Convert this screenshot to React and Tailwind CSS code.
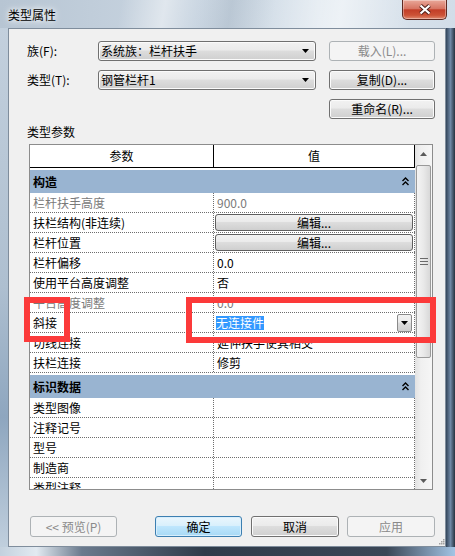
import React from 'react'

const face = "font-['Noto_Sans_CJK_SC','Noto_Sans',sans-serif]"
const btnFace = 'bg-[linear-gradient(#f2f2f2,#ebebeb_45%,#dddddd_50%,#cfcfcf)]'

function Tri({ up, color = '#000' }) {
    return (
        <svg width="7" height="4" viewBox="0 0 7 4">
            <path d={up ? 'M0 4h7L3.5 0z' : 'M0 0h7L3.5 4z'} fill={color} />
        </svg>
    )
}

function Btn({ children, disabled, focused, className = '' }) {
    const look = disabled
        ? 'border-[#adb2b5] bg-[#f4f4f4] text-[#8a8a8a]'
        : focused
            ? 'border-[#3c7fb1] bg-[linear-gradient(#eaf6fd,#d9f0fc_45%,#bee6fd_50%,#a7d9f5)] shadow-[inset_0_0_0_1px_#d8eefc]'
            : `border-[#707070] ${btnFace} shadow-[inset_0_0_0_1px_#fbfbfb]`
    return (
        <div className={`h-full flex items-center justify-center rounded-[3px] border leading-none ${look} ${className}`}>
            {children}
        </div>
    )
}

function Combo({ text }) {
    return (
        <div className={`w-[218px] h-full flex items-center justify-between rounded-[3px] border border-[#707070] ${btnFace} shadow-[inset_0_0_0_1px_#fbfbfb] pl-[2px] pr-[6px]`}>
            <span>{text}</span>
            <Tri />
        </div>
    )
}

function Chevrons() {
    return (
        <svg width="7" height="9" viewBox="0 0 7 9">
            <path d="M0.5 4 3.5 1 6.5 4M0.5 8 3.5 5 6.5 8" stroke="#000" strokeWidth="1.4" fill="none" />
        </svg>
    )
}

function Section({ title }) {
    return (
        <div className="pt-[2px] bg-white">
            <div className="h-[23px] bg-[#99b4d1] flex items-center justify-between pl-[3px] pr-[6px] font-bold">
                <span>{title}</span>
                <Chevrons />
            </div>
        </div>
    )
}

function Row({ k, v, gray, btn, combo }) {
    return (
        <div className="flex h-[20px] border-b border-dotted border-[#6e6e6e] bg-white">
            <div className={`w-[184px] shrink-0 pl-[3px] flex items-center border-r border-dotted border-[#6e6e6e] whitespace-nowrap overflow-hidden ${gray ? 'text-[#7a7a7a]' : ''}`}>{k}</div>
            <div className={`w-[201px] shrink-0 flex items-center border-r border-dotted border-[#6e6e6e] ${gray ? 'text-[#7a7a7a]' : ''}`}>
                {btn && (
                    <div className={`ml-[1px] w-[198px] h-[17px] flex items-center justify-center rounded-[3px] border border-[#5f5f5f] ${btnFace}`}>编辑...</div>
                )}
                {combo && (
                    <div className="w-full flex items-center justify-between pl-[2px] pr-[2px]">
                        <span className="bg-[#3399ff] text-white leading-[14px]">{combo}</span>
                        <div className={`w-[15px] h-[18px] flex items-center justify-center rounded-[2px] border border-[#8a8a8a] ${btnFace}`}>
                            <Tri />
                        </div>
                    </div>
                )}
                {v !== undefined && <span className="pl-[3px]">{v}</span>}
            </div>
        </div>
    )
}

const build = [
    { k: '栏杆扶手高度', v: '900.0', gray: true },
    { k: '扶栏结构(非连续)', btn: true },
    { k: '栏杆位置', btn: true },
    { k: '栏杆偏移', v: '0.0' },
    { k: '使用平台高度调整', v: '否' },
    { k: '平台高度调整', v: '0.0', gray: true },
    { k: '斜接', combo: '无连接件' },
    { k: '切线连接', v: '延伸扶手使其相交' },
    { k: '扶栏连接', v: '修剪' },
]

const ident = ['类型图像', '注释记号', '型号', '制造商', '类型注释']

export default function App() {
    return (
        <div className={`relative w-[455px] h-[556px] overflow-hidden flex flex-col text-[12px] leading-[16px] text-black ${face} bg-[linear-gradient(100deg,transparent_22%,rgba(255,255,255,0.45)_30%,transparent_36%,rgba(120,140,160,0.25)_42%,transparent_50%,rgba(255,255,255,0.5)_62%,transparent_75%),linear-gradient(to_right,#b7c5d3,#c9d5e1_40%,#dde6ee_70%,#d2dde8)]`}>
            {/* title bar */}
            <div className="h-[28px] shrink-0 flex items-start justify-between">
                <div className="pl-[8px] pt-[7px] [text-shadow:0_0_5px_#fff,0_0_8px_#fff]">类型属性</div>
                <div className="mr-[8px] w-[45px] h-[20px] rounded-b-[5px] border border-t-0 border-[#5e2a22] bg-[linear-gradient(#e9a899,#d77563_45%,#c23e28_52%,#cc5236_80%,#e08a70)] shadow-[inset_0_0_0_1px_rgba(255,255,255,0.35)] flex items-center justify-center">
                    <svg width="14" height="11" viewBox="0 0 14 11">
                        <path d="M2.5 1.5 11.5 9.5M11.5 1.5 2.5 9.5" stroke="#4a1d17" strokeWidth="4" />
                        <path d="M2.5 1.5 11.5 9.5M11.5 1.5 2.5 9.5" stroke="#fff" strokeWidth="2.2" />
                    </svg>
                </div>
            </div>

            <div className="flex flex-1">
                <div className="w-[8px] bg-[linear-gradient(#c3d0dd,#aebfd0_50%,#8ea6bf_75%,#c0cfdd)]" />
                {/* client area */}
                <div className="w-[438px] h-[519px] border border-[#7f8d9c] bg-[#f0f0f0] pl-[18px] pr-[10px] pt-[12px]">
                    <div className="flex items-center h-[20px]">
                        <span className="w-[71px]">族(F):</span>
                        <Combo text="系统族：栏杆扶手" />
                        <Btn disabled className="ml-[13px] w-[106px]">载入(L)...</Btn>
                    </div>
                    <div className="flex items-center h-[20px] mt-[9px]">
                        <span className="w-[71px]">类型(T):</span>
                        <Combo text="钢管栏杆1" />
                        <Btn className="ml-[13px] w-[106px]">复制(D)...</Btn>
                    </div>
                    <div className="flex justify-end h-[20px] mt-[9px]">
                        <Btn className="w-[106px]">重命名(R)...</Btn>
                    </div>
                    <div className="h-[25px] flex items-center">类型参数</div>

                    {/* parameter grid */}
                    <div className="ml-[2px] w-[404px] h-[346px] border border-[#8c8c8c] bg-white flex">
                        <div className="w-[385px] overflow-hidden">
                            <div className="flex h-[23px] bg-white border-b border-black">
                                <div className="w-[184px] flex items-center justify-center border-r border-black">参数</div>
                                <div className="w-[201px] flex items-center justify-center border-r border-black">值</div>
                            </div>
                            <Section title="构造" />
                            {build.map((r) => <Row key={r.k} {...r} />)}
                            <Section title="标识数据" />
                            {ident.map((k) => <Row key={k} k={k} v="" />)}
                        </div>
                        <div className="w-[17px] flex flex-col bg-[linear-gradient(to_right,#e2e2e2,#f0f0f0_35%,#f6f6f6)]">
                            <div className="h-[17px] flex items-center justify-center"><Tri up color="#5a5a5a" /></div>
                            <div className="mx-[1px] mt-[3px] h-[193px] rounded-[2px] border border-[#9a9a9a] bg-[linear-gradient(to_right,#f4f4f4,#e9e9e9_50%,#d8d8d8)] flex items-center justify-center">
                                <svg width="8" height="7" viewBox="0 0 8 7">
                                    <path d="M0 0.5h8M0 3.5h8M0 6.5h8" stroke="#6a6a6a" strokeWidth="1" />
                                </svg>
                            </div>
                            <div className="flex-1" />
                            <div className="h-[17px] flex items-center justify-center"><Tri color="#5a5a5a" /></div>
                        </div>
                    </div>

                    <div className="flex mt-[26px] ml-[3px] h-[21px]">
                        <Btn disabled className="w-[87px]">&lt;&lt; 预览(P)</Btn>
                        <Btn focused className="ml-[38px] w-[87px]">确定</Btn>
                        <Btn className="ml-[9px] w-[88px]">取消</Btn>
                        <Btn disabled className="ml-[8px] w-[88px]">应用</Btn>
                    </div>
                    <div className="flex justify-end -mr-[10px] mt-[1px]">
                        <svg width="7" height="7" viewBox="0 0 7 7" fill="#a0a0a0">
                            <rect x="5" y="1" width="1.5" height="1.5" />
                            <rect x="3" y="3" width="1.5" height="1.5" />
                            <rect x="5" y="3" width="1.5" height="1.5" />
                            <rect x="1" y="5" width="1.5" height="1.5" />
                            <rect x="3" y="5" width="1.5" height="1.5" />
                            <rect x="5" y="5" width="1.5" height="1.5" />
                        </svg>
                    </div>
                </div>
                <div className="w-[9px] bg-[linear-gradient(to_right,#33455a,#6f88a5_50%,#26323f)]" />
            </div>
            <div className="h-[9px] shrink-0 bg-[linear-gradient(to_right,#c3d1de,#e2eaf1_8%,#6a7a8d_18%,#2f3b4a_45%,#3a4656_85%,#a3c4e4)]" />

            {/* red annotation boxes */}
            <div className="absolute left-[24px] top-[297px] w-[46px] h-[45px] border-[6px] border-[#fc3a3a]" />
            <div className="absolute left-[186px] top-[297px] w-[250px] h-[46px] border-[6px] border-[#fc3a3a]" />
        </div>
    )
}
